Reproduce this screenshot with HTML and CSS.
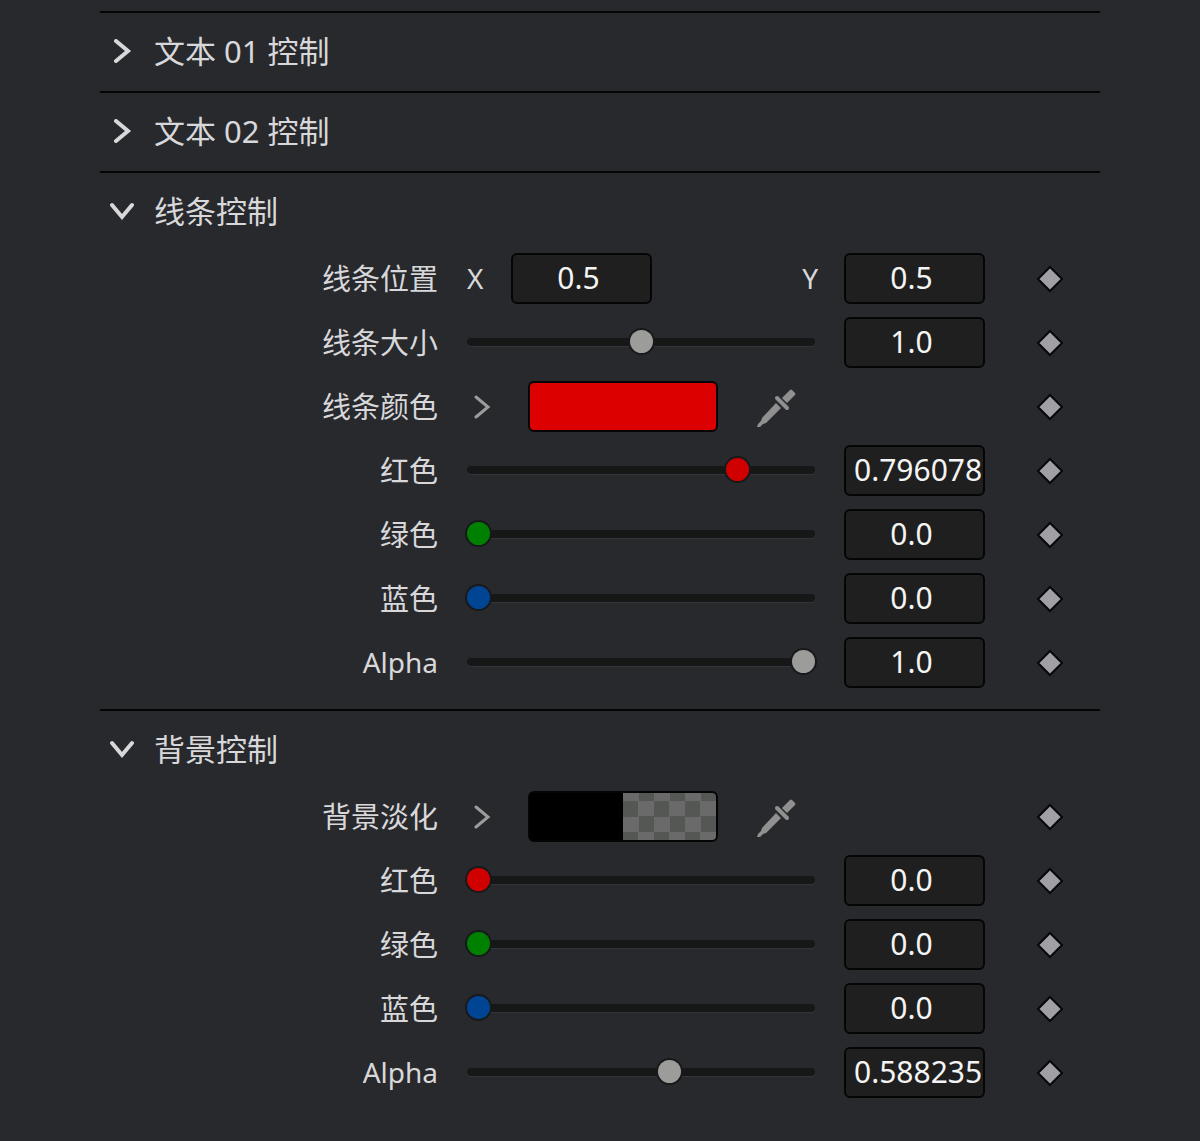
FILE: index.html
```html
<!DOCTYPE html>
<html lang="zh-CN">
<head>
  <meta charset="UTF-8" />
  <meta name="viewport" content="width=device-width, initial-scale=1.0"/>
  <title>控制</title>
  <link rel="stylesheet" href="styles.css">
</head>
<body>

  <!-- shared icons -->
  <svg class="sprite" aria-hidden="true">
    <symbol id="chevron" viewBox="0 0 24 24">
      <path d="M6 2 L18 12 L6 22" fill="none" stroke="currentColor" stroke-linecap="round" stroke-linejoin="miter"/>
    </symbol>
    <symbol id="dropper" viewBox="0 0 40 40">
      <path d="M0 40 L1 37 L4 34 L5 31 L19 16 L24 21 L9 36 L6 37 L2 41 Z" fill="currentColor"/>
      <path d="M20 11 L30 21" fill="none" stroke="currentColor" stroke-width="4" stroke-linecap="round"/>
      <path d="M25 11 L33 3 Q34 2 35 3 L38 6 Q39 7 38 8 L30 16 Z" fill="currentColor"/>
    </symbol>
    <symbol id="diamond" viewBox="0 0 28 28">
      <path d="M14 2 L26 14 L14 26 L2 14 Z" fill="#a0a0a4" stroke="#070709" stroke-width="2"/>
    </symbol>
  </svg>

  <main class="panel">

    <details class="section">
      <summary><svg class="arrow"><use href="#chevron"/></svg>文本 01 控制</summary>
    </details>

    <details class="section">
      <summary><svg class="arrow"><use href="#chevron"/></svg>文本 02 控制</summary>
    </details>

    <details class="section" open>
      <summary><svg class="arrow"><use href="#chevron"/></svg>线条控制</summary>
      <div class="rows">
        <div class="row">
          <span class="label">线条位置</span>
          <div class="position">
            <label class="axis" for="pos-x">X</label>
            <input class="field" id="pos-x" type="text" value="0.5">
            <label class="axis-y" for="pos-y">Y</label>
          </div>
          <input class="field" id="pos-y" type="text" value="0.5">
          <button class="key" aria-label="线条位置关键帧"><svg><use href="#diamond"/></svg></button>
        </div>
        <div class="row">
          <label class="label" for="size">线条大小</label>
          <input class="slider" id="size" type="range" min="0" max="2" step="any" value="1">
          <input class="field" type="text" value="1.0" aria-label="线条大小">
          <button class="key" aria-label="线条大小关键帧"><svg><use href="#diamond"/></svg></button>
        </div>
        <div class="row">
          <span class="label">线条颜色</span>
          <div class="color">
            <button class="more" aria-label="展开"><svg><use href="#chevron"/></svg></button>
            <button class="swatch line" aria-label="线条颜色"></button>
            <button class="pick" aria-label="吸管"><svg><use href="#dropper"/></svg></button>
          </div>
          <button class="key" aria-label="线条颜色关键帧"><svg><use href="#diamond"/></svg></button>
        </div>
        <div class="row">
          <label class="label" for="line-red">红色</label>
          <input class="slider red" id="line-red" type="range" min="0" max="1" step="any" value="0.796078">
          <input class="field long" type="text" value="0.796078" aria-label="红色">
          <button class="key" aria-label="红色关键帧"><svg><use href="#diamond"/></svg></button>
        </div>
        <div class="row">
          <label class="label" for="line-green">绿色</label>
          <input class="slider green" id="line-green" type="range" min="0" max="1" step="any" value="0">
          <input class="field" type="text" value="0.0" aria-label="绿色">
          <button class="key" aria-label="绿色关键帧"><svg><use href="#diamond"/></svg></button>
        </div>
        <div class="row">
          <label class="label" for="line-blue">蓝色</label>
          <input class="slider blue" id="line-blue" type="range" min="0" max="1" step="any" value="0">
          <input class="field" type="text" value="0.0" aria-label="蓝色">
          <button class="key" aria-label="蓝色关键帧"><svg><use href="#diamond"/></svg></button>
        </div>
        <div class="row">
          <label class="label latin" for="line-alpha">Alpha</label>
          <input class="slider" id="line-alpha" type="range" min="0" max="1" step="any" value="1">
          <input class="field" type="text" value="1.0" aria-label="Alpha">
          <button class="key" aria-label="Alpha 关键帧"><svg><use href="#diamond"/></svg></button>
        </div>
      </div>
    </details>

    <details class="section" open>
      <summary><svg class="arrow"><use href="#chevron"/></svg>背景控制</summary>
      <div class="rows">
        <div class="row">
          <span class="label">背景淡化</span>
          <div class="color">
            <button class="more" aria-label="展开"><svg><use href="#chevron"/></svg></button>
            <button class="swatch fade" aria-label="背景淡化"></button>
            <button class="pick" aria-label="吸管"><svg><use href="#dropper"/></svg></button>
          </div>
          <button class="key" aria-label="背景淡化关键帧"><svg><use href="#diamond"/></svg></button>
        </div>
        <div class="row">
          <label class="label" for="bg-red">红色</label>
          <input class="slider red" id="bg-red" type="range" min="0" max="1" step="any" value="0">
          <input class="field" type="text" value="0.0" aria-label="红色">
          <button class="key" aria-label="红色关键帧"><svg><use href="#diamond"/></svg></button>
        </div>
        <div class="row">
          <label class="label" for="bg-green">绿色</label>
          <input class="slider green" id="bg-green" type="range" min="0" max="1" step="any" value="0">
          <input class="field" type="text" value="0.0" aria-label="绿色">
          <button class="key" aria-label="绿色关键帧"><svg><use href="#diamond"/></svg></button>
        </div>
        <div class="row">
          <label class="label" for="bg-blue">蓝色</label>
          <input class="slider blue" id="bg-blue" type="range" min="0" max="1" step="any" value="0">
          <input class="field" type="text" value="0.0" aria-label="蓝色">
          <button class="key" aria-label="蓝色关键帧"><svg><use href="#diamond"/></svg></button>
        </div>
        <div class="row">
          <label class="label latin" for="bg-alpha">Alpha</label>
          <input class="slider" id="bg-alpha" type="range" min="0" max="1" step="any" value="0.588235">
          <input class="field long" type="text" value="0.588235" aria-label="Alpha">
          <button class="key" aria-label="Alpha 关键帧"><svg><use href="#diamond"/></svg></button>
        </div>
      </div>
    </details>

  </main>

</body>
</html>
```
FILE: styles.css
```css
* {
  box-sizing: border-box;
}
body {
  margin: 0;
  background-color: #28292d;
  color: #d8d8da;
  font-family: "Noto Sans", "Noto Sans CJK SC", sans-serif;
}
button {
  padding: 0;
  border: none;
  background: none;
  cursor: pointer;
}
.sprite {
  display: none;
}
.panel {
  padding: 11px 100px 21px;
}

/* collapsible sections */
.section {
  border-top: 2px solid #050506;
}
summary {
  display: flex;
  align-items: center;
  gap: 20px;
  height: 78px;
  padding: 0 0 2px 10px;
  font-size: 31px;
  line-height: 40px;
  list-style: none;
  cursor: pointer;
}
.arrow {
  width: 24px;
  height: 24px;
  stroke-width: 4px;
}
.section[open] .arrow {
  transform: rotate(90deg);
}
.rows {
  display: grid;
  gap: 13px;
  padding: 2px 0 21px;
}
.row {
  display: grid;
  grid-template-columns: 338px 1fr 140px 87px;
  column-gap: 29px;
  align-items: center;
  height: 51px;
}
.label {
  text-align: right;
  font-size: 29px;
  line-height: 40px;
}
.latin {
  padding-bottom: 2px;
  font-size: 28px;
}

/* inputs */
.field {
  width: 141px;
  height: 51px;
  padding: 0 6px 2px 0;
  border: 2px solid #050506;
  border-radius: 6px;
  background-color: #1e1f1e;
  color: #f4f4f4;
  font-family: inherit;
  font-size: 30px;
  text-align: center;
}
.field.long {
  padding: 0 0 2px 8px;
  text-align: left;
}
.position {
  display: flex;
  align-items: center;
  margin-right: -3px;
  font-size: 28px;
}
.axis {
  width: 44px;
  padding-bottom: 2px;
}
.axis-y {
  margin-left: auto;
  padding-bottom: 2px;
}
.slider {
  --thumb: #9c9c9a;
  -webkit-appearance: none;
  appearance: none;
  width: 100%;
  height: 24px;
  margin: 0 0 2px;
  background: none;
}
.slider::-webkit-slider-runnable-track {
  height: 8px;
  border-radius: 4px;
  background-color: #161817;
  box-shadow: 0 1px 0 #34353a;
}
.slider::-webkit-slider-thumb {
  -webkit-appearance: none;
  width: 23px;
  height: 23px;
  margin-top: -8px;
  border-radius: 50%;
  background-color: var(--thumb);
  box-shadow: 0 0 0 2px #17191a;
}
.red {
  --thumb: #d00000;
}
.green {
  --thumb: #008000;
}
.blue {
  --thumb: #004494;
}

/* color row */
.color {
  display: flex;
  align-items: center;
  gap: 31px;
  grid-column: span 2;
}
.more {
  width: 30px;
  height: 24px;
  color: #9c9c9c;
}
.more svg {
  width: 24px;
  height: 24px;
  stroke-width: 3px;
}
.swatch {
  width: 190px;
  height: 51px;
  border: 2px solid #050506;
  border-radius: 6px;
}
.line {
  background-color: #dc0000;
}
.fade {
  background:
    linear-gradient(to right, #000 50%, transparent 50%),
    repeating-conic-gradient(#696a69 0 25%, #555755 0 50%) 0 8px / 31px 31px;
}
.pick {
  width: 55px;
  height: 40px;
  color: #8f908f;
}
.pick svg {
  width: 40px;
  height: 40px;
  overflow: visible;
}
.key {
  width: 74px;
  height: 28px;
}
.key svg {
  display: block;
  width: 28px;
  height: 28px;
  margin: 0 auto;
}
```
